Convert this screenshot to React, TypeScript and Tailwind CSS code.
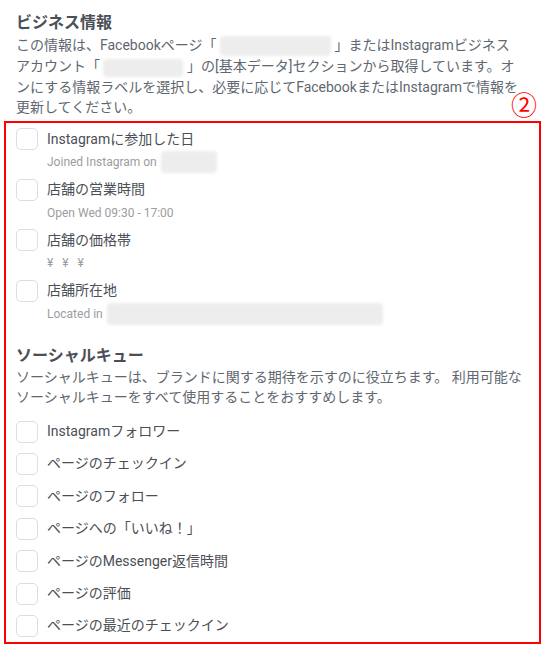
import React from 'react';

const font = { fontFamily: "Roboto, 'Noto Sans CJK JP', sans-serif" };

// blurred placeholder where the original hid names / dates
const Blur: React.FC<{ w: number; h?: number }> = ({ w, h = 20 }) => (
  <span
    className="inline-block align-middle bg-[#ededed] blur-[1.5px] rounded-sm"
    style={{ width: w, height: h }}
  />
);

const Box = () => (
  <div className="w-[22px] h-[22px] flex-shrink-0 rounded-[5px] border border-[#dadde1] bg-white" />
);

const DetailItem: React.FC<{ label: string; sub: React.ReactNode }> = ({ label, sub }) => (
  <div className="h-[50.6px]">
    <div className="flex items-center gap-[9px] h-[22px]">
      <Box />
      <span className="text-[14px] text-[#4b4f56] whitespace-nowrap">{label}</span>
    </div>
    <div className="pl-[31px] h-[24px] flex items-center text-[12px] text-[#9a9da2] whitespace-nowrap">
      {sub}
    </div>
  </div>
);

const CueItem: React.FC<{ label: string }> = ({ label }) => (
  <div className="flex items-center gap-[9px] h-[22px]">
    <Box />
    <span className="text-[14px] text-[#4b4f56] whitespace-nowrap">{label}</span>
  </div>
);

export default function App() {
  const cues = [
    'Instagramフォロワー',
    'ページのチェックイン',
    'ページのフォロー',
    'ページへの「いいね！」',
    'ページのMessenger返信時間',
    'ページの評価',
    'ページの最近のチェックイン',
  ];

  return (
    <div className="w-[549px] h-[655px] bg-white relative" style={font}>
      {/* Business info header */}
      <div className="pt-[11px] px-4">
        <div className="text-[16px] font-bold text-[#4b4f56] leading-[24px]">ビジネス情報</div>
        <div className="text-[14px] text-[#606770] leading-[20.3px] whitespace-nowrap">
          <div>
            この情報は、Facebookページ「 <Blur w={111} /> 」またはInstagramビジネス
          </div>
          <div>
            アカウント「 <Blur w={80} h={18} /> 」の[基本データ]セクションから取得しています。オ
          </div>
          <div>ンにする情報ラベルを選択し、必要に応じてFacebookまたはInstagramで情報を</div>
          <div>更新してください。</div>
        </div>
      </div>

      {/* annotation number */}
      <div className="absolute left-[511px] top-[91px] text-[26px] leading-[30px] text-[#ff0000]">②</div>

      {/* annotated block */}
      <div className="ml-[4px] mt-[4px] w-[537px] h-[523px] border-2 border-[#ff0000] pl-[10px] pt-[5px]">
        <DetailItem
          label="Instagramに参加した日"
          sub={
            <>
              Joined Instagram on <span className="ml-1"><Blur w={56} h={22} /></span>
            </>
          }
        />
        <DetailItem label="店舗の営業時間" sub="Open Wed 09:30 - 17:00" />
        <DetailItem label="店舗の価格帯" sub={<span className="tracking-[3px]">¥ ¥ ¥</span>} />
        <DetailItem
          label="店舗所在地"
          sub={
            <>
              Located in <span className="ml-1"><Blur w={276} h={22} /></span>
            </>
          }
        />

        {/* Social cues */}
        <div className="pt-[14px]">
          <div className="text-[16px] font-bold text-[#4b4f56] leading-[22px]">ソーシャルキュー</div>
          <div className="text-[14px] text-[#606770] leading-[20.5px] whitespace-nowrap">
            <div>ソーシャルキューは、ブランドに関する期待を示すのに役立ちます。 利用可能な</div>
            <div>ソーシャルキューをすべて使用することをおすすめします。</div>
          </div>
        </div>

        <div className="mt-[13px] flex flex-col gap-[10.4px]">
          {cues.map((c) => (
            <CueItem key={c} label={c} />
          ))}
        </div>
      </div>
    </div>
  );
}
